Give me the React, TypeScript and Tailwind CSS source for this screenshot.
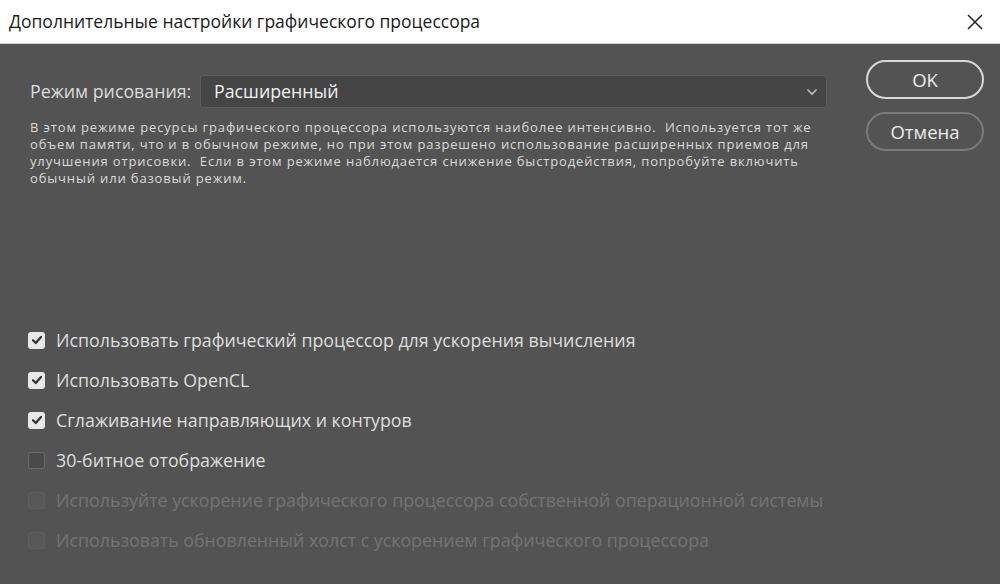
import React from "react";

const Check = ({ checked, disabled }: { checked?: boolean; disabled?: boolean }) => (
  <div
    className={
      "w-[17px] h-[17px] rounded-[3px] flex items-center justify-center shrink-0 " +
      (checked
        ? "bg-[#e8e8e8]"
        : disabled
        ? "bg-[#585858] border border-[#5e5e5e]"
        : "bg-[#4a4a4a] border border-[#6a6a6a]")
    }
  >
    {checked && (
      <svg width="12" height="12" viewBox="0 0 12 12">
        <path d="M2 6.2 L4.8 9 L10 3" fill="none" stroke="#333" strokeWidth="2.2" strokeLinecap="round" strokeLinejoin="round" />
      </svg>
    )}
  </div>
);

const rows: { label: string; checked?: boolean; disabled?: boolean }[] = [
  { label: "Использовать графический процессор для ускорения вычисления", checked: true },
  { label: "Использовать OpenCL", checked: true },
  { label: "Сглаживание направляющих и контуров", checked: true },
  { label: "30-битное отображение" },
  { label: "Используйте ускорение графического процессора собственной операционной системы", disabled: true },
  { label: "Использовать обновленный холст с ускорением графического процессора", disabled: true },
];

export default function App() {
  return (
    <div className="w-[1000px] h-[584px] flex flex-col bg-[#535353] overflow-hidden" style={{ fontFamily: '"Open Sans", "Noto Sans", sans-serif' }}>
      <div className="h-[44px] bg-white border-b border-[#cfcfcf] flex items-center justify-between pl-[9px] pr-[16px] shrink-0">
        <div className="text-[17.5px] text-[#1a1a1a]">Дополнительные настройки графического процессора</div>
        <svg width="18" height="18" viewBox="0 0 18 18">
          <path d="M2 2 L16 16 M16 2 L2 16" stroke="#222" strokeWidth="1.5" />
        </svg>
      </div>
      <div className="flex flex-1">
        <div className="flex-1 pl-[30px] pt-[31px] pr-[10px]">
          <div className="flex items-center">
            <div className="text-[17.8px] text-[#dcdcdc] w-[170px]">Режим рисования:</div>
            <div className="w-[627px] h-[33px] bg-[#454545] border border-[#5c5c5c] rounded-[3px] flex items-center justify-between pl-[13px] pr-[8px]">
              <span className="text-[17.8px] text-[#f0f0f0]">Расширенный</span>
              <svg width="12" height="8" viewBox="0 0 12 8">
                <path d="M1.5 1.5 L6 6 L10.5 1.5" fill="none" stroke="#bdbdbd" strokeWidth="1.6" />
              </svg>
            </div>
          </div>
          <div className="mt-[11px] text-[13px] leading-[17px] tracking-[0.85px] text-[#dadada] whitespace-nowrap">
            <div>В этом режиме ресурсы графического процессора используются наиболее интенсивно.&nbsp; Используется тот же</div>
            <div>объем памяти, что и в обычном режиме, но при этом разрешено использование расширенных приемов для</div>
            <div>улучшения отрисовки.&nbsp; Если в этом режиме наблюдается снижение быстродействия, попробуйте включить</div>
            <div>обычный или базовый режим.</div>
          </div>
          <div className="mt-[133px] -ml-[2px] flex flex-col">
            {rows.map((r, i) => (
              <div key={i} className="h-[40px] flex items-center gap-[11px]">
                <Check checked={r.checked} disabled={r.disabled} />
                <span className={"text-[17.8px] whitespace-nowrap " + (r.disabled ? "text-[#737373]" : "text-[#dedede]")}>{r.label}</span>
              </div>
            ))}
          </div>
        </div>
        <div className="w-[134px] pt-[16px] flex flex-col gap-[13px]">
          <button className="w-[118px] h-[39px] rounded-full border-2 border-[#d8d8d8] text-[18.5px] text-[#ececec]">OK</button>
          <button className="w-[118px] h-[39px] rounded-full border-2 border-[#7a7a7a] text-[18.5px] text-[#ececec]">Отмена</button>
        </div>
      </div>
    </div>
  );
}
